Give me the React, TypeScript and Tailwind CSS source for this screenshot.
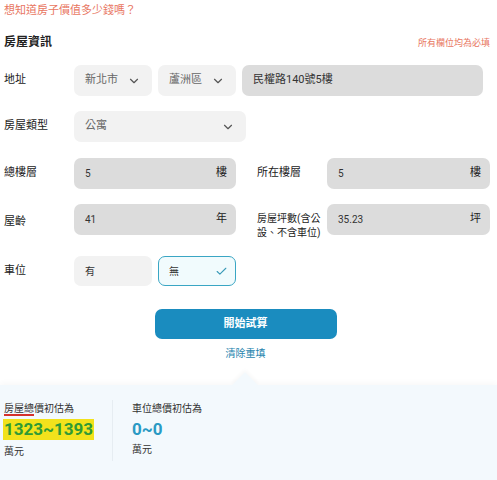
import { ChevronDown, Check } from 'lucide-react';

const font = { fontFamily: "Roboto, 'Noto Sans CJK TC', sans-serif" };

const Select = ({ value, className = '' }: { value: string; className?: string }) => (
  <div
    className={`flex h-[31px] items-center justify-between rounded-[7px] bg-[#f2f2f2] pl-[11px] pr-[11px] text-[11px] text-[#666] ${className}`}
  >
    <span>{value}</span>
    <ChevronDown size={14} strokeWidth={2} className="text-[#555]" />
  </div>
);

const Field = ({ value, unit, className = '' }: { value: string; unit?: string; className?: string }) => (
  <div
    className={`flex h-[31px] items-center justify-between rounded-[7px] bg-[#dcdcdc] pl-[11px] pr-[9px] text-[10px] text-[#333] ${className}`}
  >
    <span>{value}</span>
    {unit && <span className="text-[11px] text-[#222]">{unit}</span>}
  </div>
);

const Label = ({ children, className = '' }: { children: React.ReactNode; className?: string }) => (
  <div className={`w-[70px] shrink-0 text-[#222] ${className}`}>{children}</div>
);

export default function App() {
  return (
    <div className="relative h-[480px] w-[497px] overflow-hidden bg-white" style={font}>
      <div className="px-[4px]">
        <p className="pt-[3px] text-[11px] leading-[16px] text-[#e8765f]">想知道房子價值多少錢嗎？</p>

        <div className="mt-[15px] flex items-end justify-between">
          <h2 className="text-[12px] font-bold leading-[16px] text-[#222]">房屋資訊</h2>
          <span className="mr-[3px] text-[9px] text-[#e8765f]">所有欄位均為必填</span>
        </div>

        <div className="mt-[15px] flex items-center">
          <Label className="text-[11px]">地址</Label>
          <div className="flex gap-[6px]">
            <Select value="新北市" className="w-[78px]" />
            <Select value="蘆洲區" className="w-[78px]" />
            <Field value="民權路140號5樓" className="w-[241px] text-[11px] text-[#222]" />
          </div>
        </div>

        <div className="mt-[15px] flex items-center">
          <Label className="text-[11px]">房屋類型</Label>
          <Select value="公寓" className="w-[172px]" />
        </div>

        <div className="mt-[16px] flex items-center">
          <Label className="text-[11px]">總樓層</Label>
          <Field value="5" unit="樓" className="w-[162px]" />
          <Label className="ml-[21px] text-[11px]">所在樓層</Label>
          <Field value="5" unit="樓" className="w-[163px]" />
        </div>

        <div className="mt-[15px] flex items-start">
          <Label className="self-center text-[11px]">屋齡</Label>
          <Field value="41" unit="年" className="w-[162px]" />
          <Label className="ml-[21px] pt-[8px] text-[10px] leading-[14px]">
            房屋坪數(含公
            <br />
            設、不含車位)
          </Label>
          <Field value="35.23" unit="坪" className="w-[163px]" />
        </div>

        <div className="mt-[16px] flex items-center">
          <Label className="text-[11px]">車位</Label>
          <div className="flex gap-[6px]">
            <div className="flex h-[30px] w-[78px] items-center rounded-[7px] bg-[#f2f2f2] pl-[11px] text-[10px] text-[#333]">
              有
            </div>
            <div className="flex h-[30px] w-[78px] items-center justify-between rounded-[7px] border border-[#3aa6c4] bg-[#f1fbfd] pl-[10px] pr-[7px] text-[10px] text-[#333]">
              <span>無</span>
              <Check size={13} strokeWidth={2} className="text-[#3a9ab8]" />
            </div>
          </div>
        </div>

        <div className="mt-[23px] flex flex-col items-center">
          <button className="ml-[-6px] flex h-[30px] w-[182px] items-center justify-center rounded-[7px] bg-[#1a8cbf] text-[11px] font-bold text-white">
            開始試算
          </button>
          <span className="mt-[7px] ml-[-6px] text-[10px] text-[#2483ad]">清除重填</span>
        </div>
      </div>

      <div className="absolute left-0 right-0 top-[385px] bottom-0 bg-[#f3f9fd] shadow-[0_-2px_6px_rgba(0,0,0,0.03)]">
        <div className="absolute left-[236px] top-[-9px] h-[18px] w-[18px] rotate-45 bg-[#f3f9fd] shadow-[-2px_-2px_4px_rgba(0,0,0,0.03)]" />
        <div className="relative flex pt-[17px]">
          <div className="w-[112px] pl-[3px]">
            <p className="pl-[1px] text-[10px] leading-[14px] text-[#333]">
              <span className="underline decoration-[#d4322c] decoration-[1.5px] underline-offset-[2px]">房屋總</span>
              價初估為
            </p>
            <p className="mt-[3px] inline-block bg-[#f2e21c] px-[1px] text-[17px] font-bold leading-[21px] text-[#2f9a35]">
              1323~1393
            </p>
            <p className="mt-[2px] pl-[1px] text-[10px] text-[#333]">萬元</p>
          </div>
          <div className="my-[-2px] w-px bg-[#e6edf2]" />
          <div className="pl-[19px]">
            <p className="text-[10px] leading-[14px] text-[#333]">車位總價初估為</p>
            <p className="mt-[3px] text-[17px] font-bold leading-[21px] text-[#2a9ac4]">0~0</p>
            <p className="mt-[2px] text-[10px] text-[#333]">萬元</p>
          </div>
        </div>
      </div>
    </div>
  );
}
